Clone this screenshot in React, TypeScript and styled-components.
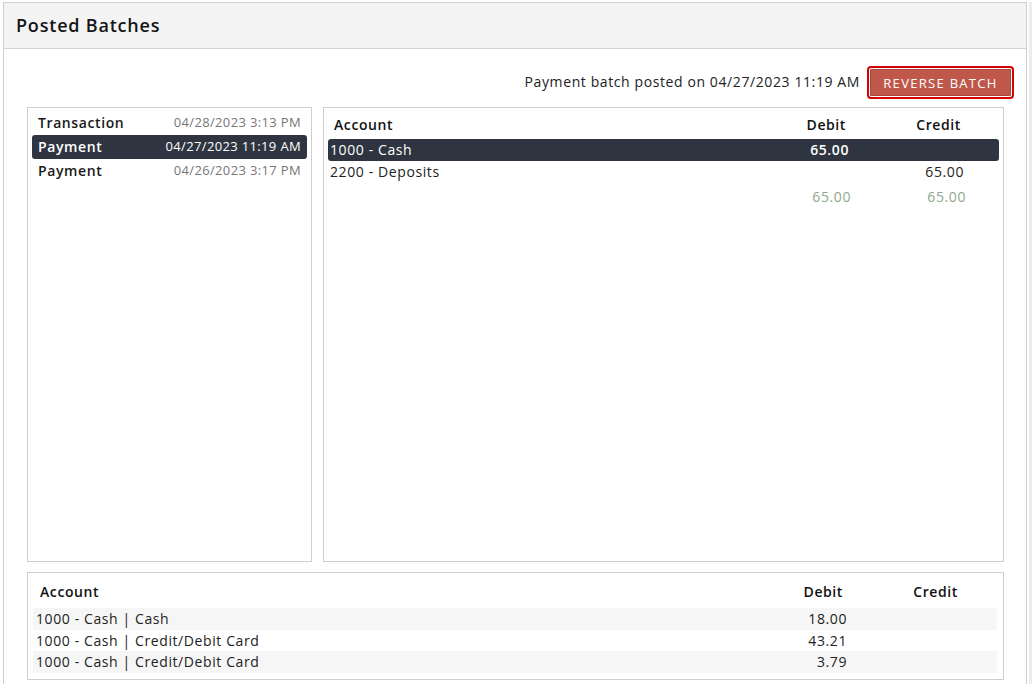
import React from 'react';
import styled, { createGlobalStyle } from 'styled-components';

const GlobalStyle = createGlobalStyle`
  html, body {
    margin: 0;
    padding: 0;
    background: #fff;
  }
  body {
    font-family: "Open Sans", "Liberation Sans", sans-serif;
    letter-spacing: 0.6px;
    color: #222;
  }
`;

const batches = [
  { type: 'Transaction', date: '04/28/2023 3:13 PM', selected: false },
  { type: 'Payment', date: '04/27/2023 11:19 AM', selected: true },
  { type: 'Payment', date: '04/26/2023 3:17 PM', selected: false },
];

const entries = [
  { account: '1000 - Cash', debit: '65.00', credit: '', selected: true },
  { account: '2200 - Deposits', debit: '', credit: '65.00', selected: false },
];

const details = [
  { account: '1000 - Cash | Cash', debit: '18.00' },
  { account: '1000 - Cash | Credit/Debit Card', debit: '43.21' },
  { account: '1000 - Cash | Credit/Debit Card', debit: '3.79' },
];

export default function App() {
  return (
    <Page>
      <GlobalStyle />
      <Panel>
        <PanelHeader>Posted Batches</PanelHeader>
        <PanelBody>
          <Toolbar>
            <PostedText>Payment batch posted on 04/27/2023 11:19 AM</PostedText>
            <ReverseButton>REVERSE BATCH</ReverseButton>
          </Toolbar>
          <Columns>
            <ListBox>
              {batches.map((b, i) => (
                <BatchRow key={i} $selected={b.selected}>
                  <BatchType>{b.type}</BatchType>
                  <BatchDate $selected={b.selected}>{b.date}</BatchDate>
                </BatchRow>
              ))}
            </ListBox>
            <EntryBox>
              <EntryHead>
                <span>Account</span>
                <HeadNum>Debit</HeadNum>
                <HeadNum>Credit</HeadNum>
              </EntryHead>
              {entries.map((e, i) => (
                <EntryRow key={i} $selected={e.selected}>
                  <span>{e.account}</span>
                  <Num>{e.debit}</Num>
                  <Num>{e.credit}</Num>
                </EntryRow>
              ))}
              <TotalRow>
                <span />
                <Num>65.00</Num>
                <Num>65.00</Num>
              </TotalRow>
            </EntryBox>
          </Columns>
          <DetailBox>
            <DetailHead>
              <span>Account</span>
              <HeadNum>Debit</HeadNum>
              <HeadNum>Credit</HeadNum>
            </DetailHead>
            {details.map((d, i) => (
              <DetailRow key={i} $striped={i % 2 === 0}>
                <span>{d.account}</span>
                <Num>{d.debit}</Num>
                <Num />
              </DetailRow>
            ))}
          </DetailBox>
        </PanelBody>
      </Panel>
      <ScrollTrack />
    </Page>
  );
}

const Page = styled.div`
  display: flex;
  width: 1032px;
  height: 684px;
  overflow: hidden;
  box-sizing: border-box;
  padding: 2px 0 0 3px;
`;

const Panel = styled.div`
  width: 1024px;
  flex-shrink: 0;
  border: 1px solid #cfcfcf;
  border-bottom: none;
  box-sizing: border-box;
  background: #fff;
`;

const ScrollTrack = styled.div`
  flex: 1;
  margin-left: 2px;
  background: #ececec;
`;

const PanelHeader = styled.div`
  height: 46px;
  box-sizing: border-box;
  background: #f4f4f4;
  border-bottom: 1px solid #d3d3d3;
  padding: 10px 0 0 12px;
  font-size: 18px;
  font-weight: 600;
  letter-spacing: 0.8px;
  color: #141414;
`;

const PanelBody = styled.div`
  padding: 17px 22px 0 23px;
`;

const Toolbar = styled.div`
  display: flex;
  justify-content: flex-end;
  align-items: center;
  gap: 10px;
  height: 33px;
  margin-right: -10px;
`;

const PostedText = styled.span`
  font-size: 14px;
  color: #222;
  margin-top: -2px;
`;

const ReverseButton = styled.button`
  height: 27px;
  width: 141px;
  margin-right: 3px;
  border: 1px solid #a8483d;
  background: #c0574b;
  color: #fff;
  font-family: inherit;
  font-size: 13px;
  letter-spacing: 1.3px;
  border-radius: 1px;
  outline: 2px solid #d60000;
  outline-offset: 1px;
`;

const Columns = styled.div`
  display: flex;
  gap: 11px;
  margin-top: 8px;
  height: 455px;
`;

const Box = styled.div`
  border: 1px solid #cfcfcf;
  box-sizing: border-box;
  background: #fff;
`;

const ListBox = styled(Box)`
  width: 285px;
  padding: 3px 4px;
`;

const BatchRow = styled.div<{ $selected: boolean }>`
  display: flex;
  justify-content: space-between;
  align-items: center;
  height: 24px;
  padding: 0 6px 0 6px;
  border-radius: 3px;
  font-size: 14px;
  font-weight: 600;
  background: ${(p) => (p.$selected ? '#2f3540' : 'transparent')};
  color: ${(p) => (p.$selected ? '#fff' : '#1a1a1a')};
`;

const BatchType = styled.span`
  margin-top: -2px;
`;

const BatchDate = styled.span<{ $selected: boolean }>`
  font-size: 13px;
  letter-spacing: 0.35px;
  margin-top: -2px;
  font-weight: ${(p) => (p.$selected ? 500 : 400)};
  color: ${(p) => (p.$selected ? '#fff' : '#777')};
`;

const EntryBox = styled(Box)`
  flex: 1;
  padding: 5px 4px;
`;

const Grid = styled.div`
  display: grid;
  grid-template-columns: 1fr 110px 115px;
  align-items: center;
  box-sizing: border-box;
  font-size: 14px;
`;

const EntryHead = styled(Grid)`
  height: 26px;
  padding: 0 38px 4px 6px;
  font-weight: 600;
  color: #111;
`;

const HeadNum = styled.span`
  text-align: right;
`;

const Num = styled.span`
  text-align: right;
`;

const EntryRow = styled(Grid)<{ $selected: boolean }>`
  height: 22px;
  padding: 0 35px 2px 2px;
  border-radius: 3px;
  background: ${(p) => (p.$selected ? '#2f3540' : 'transparent')};
  color: ${(p) => (p.$selected ? '#fff' : '#222')};
  font-weight: 400;
  & > span:nth-child(2) {
    font-weight: ${(p) => (p.$selected ? 600 : 400)};
  }
`;

const TotalRow = styled(Grid)`
  height: 28px;
  padding: 0 33px 2px 2px;
  color: #8fa88e;
`;

const DetailBox = styled(Box)`
  margin-top: 10px;
  height: 108px;
  padding: 7px 6px 0 5px;
`;

const DetailHead = styled(Grid)`
  height: 28px;
  padding: 0 39px 5px 7px;
  font-weight: 600;
  color: #111;
`;

const DetailRow = styled(Grid)<{ $striped: boolean }>`
  height: 21.5px;
  padding: 0 35px 0 3px;
  background: ${(p) => (p.$striped ? '#f6f6f6' : '#fff')};
  color: #222;
`;
